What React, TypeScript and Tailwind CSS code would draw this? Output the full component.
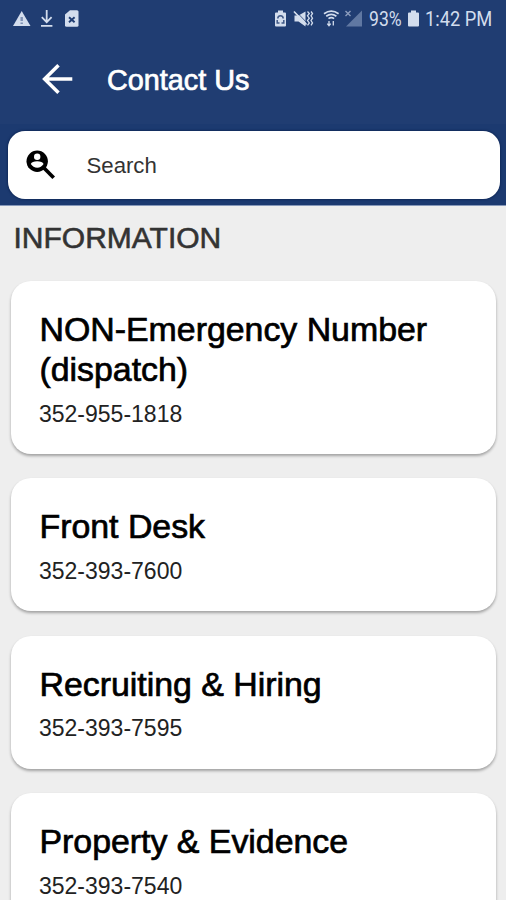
import React from 'react';

interface Contact {
    name: string;
    phone: string;
}

const contacts: Contact[] = [
    { name: 'NON-Emergency Number (dispatch)', phone: '352-955-1818' },
    { name: 'Front Desk', phone: '352-393-7600' },
    { name: 'Recruiting & Hiring', phone: '352-393-7595' },
    { name: 'Property & Evidence', phone: '352-393-7540' },
];

const StatusBar: React.FC = () => (
    <div className="flex h-[37px] items-center pl-3 pr-[13px] text-[#d3dded]">
        <svg width="19" height="18" viewBox="0 0 19 18" fill="currentColor">
            <path d="M9.7 1 18.5 16H1z" />
            <path d="M9.7 7v4M9.7 12.4v1.6" stroke="#7d90b3" strokeWidth="2.4" />
        </svg>
        <svg className="ml-2" width="16" height="18" viewBox="0 0 16 18" fill="none" stroke="currentColor" strokeWidth="1.8">
            <path d="M7.7 0v12M2.8 7.2l4.9 5 4.9-5M2 15.8h11.4" />
        </svg>
        <svg className="ml-[9px]" width="17" height="18" viewBox="0 0 17 18">
            <path d="M6 .3h7q1.5 0 1.5 1.5v13.4q0 1.5-1.5 1.5H2.5Q1 16.7 1 15.2V4.5z" fill="currentColor" />
            <path d="m5 7.3 5.6 5m0-5-5.6 5" stroke="#203d72" strokeWidth="1.9" />
        </svg>

        <div className="ml-auto flex items-center">
            <svg width="13" height="18" viewBox="0 0 13 18">
                <path d="M4 .5h5v2h2q1 0 1 1v12q0 1-1 1H2q-1 0-1-1v-12q0-1 1-1h2z" fill="currentColor" />
                <path d="M3.8 8.5q0-2.8 2.7-2.8t2.7 2.8M3.2 10v3h2.3M9.8 10v3H7.5" fill="none" stroke="#405987" strokeWidth="1.5" />
            </svg>
            <svg className="ml-[6px]" width="21" height="18" viewBox="0 0 21 18">
                <path d="M1.5 5.5h4l7-4v15l-7-5h-4z" fill="currentColor" />
                <path d="m1 1.5 12.5 13" stroke="currentColor" strokeWidth="1.8" />
                <path d="m2.6 1 12 12.5" stroke="#203d72" strokeWidth="0.8" />
                <path d="m14.5 1.5 1.8 2-1.8 2.3 1.8 2.4-1.8 2.4 1.8 2.3-1.8 2.4M18 1.5l1.5 2L18 5.8l1.5 2.4-1.5 2.4 1.5 2.3-1.5 2.4" fill="none" stroke="currentColor" strokeWidth="1.3" />
            </svg>
            <svg className="ml-[9px]" width="17" height="18" viewBox="0 0 17 18" fill="none" stroke="currentColor" strokeWidth="1.7">
                <path d="M1 3.7q7.3-5 14.6 0M3.2 6.2q5.1-3.5 10.2 0M5.5 8.6q2.8-2 5.6 0" />
                <path d="M6 11v4.5m-1.7-1.8L6 15.8l1.7-2.1M10.3 15.5V11" strokeWidth="1.3" />
            </svg>
            <svg className="ml-[4px]" width="19" height="18" viewBox="0 0 19 18">
                <path d="M18 .5v16H2z" fill="#6078a2" />
                <path d="m1.5 1 5 5m0-5-5 5" stroke="#8c9dbd" strokeWidth="1.4" />
            </svg>
            <span className="ml-[6px] w-[34px] whitespace-nowrap font-[Roboto,sans-serif] text-[20px] leading-none"><span className="inline-block origin-left scale-x-[0.88]">93%</span></span>
            <svg className="ml-[4px]" width="13" height="18" viewBox="0 0 13 18" fill="currentColor">
                <path d="M4 .5h5v2h2q1 0 1 1v12q0 1-1 1H2q-1 0-1-1v-12q0-1 1-1h2z" />
            </svg>
            <span className="ml-[5px] w-[68px] whitespace-nowrap font-[Roboto,sans-serif] text-[20px] leading-none"><span className="inline-block origin-left scale-x-[0.915]">1:42 PM</span></span>
        </div>
    </div>
);

const Header: React.FC = () => (
    <header className="h-[206px] border-b border-[#8698b9] bg-[#203d72]">
        <StatusBar />
        <div className="flex h-[87px] items-center pl-[41px]">
            <svg className="mb-[3px]" width="33" height="32" viewBox="0 0 33 32" fill="none" stroke="#fff" strokeWidth="3.5">
                <path d="M31.3 16H4M17.5 2.2 3.6 16l13.9 13.8" />
            </svg>
            <h1 className="ml-[33px] text-[28.8px] leading-none text-white [-webkit-text-stroke:0.7px_white]">Contact Us</h1>
        </div>
        <div className="h-[81px] bg-[#1c3a70] pl-[7.5px] pr-[6.5px] pt-[7px]">
            <label className="flex h-[68px] items-center rounded-[17px] bg-white pl-[18.5px] shadow-[0_0_2px_1px_#112b5c]">
                <svg width="30" height="30" viewBox="0 0 30 30">
                    <circle cx="11.2" cy="11.2" r="10.7" />
                    <circle cx="11.2" cy="6.8" r="3.2" fill="#fff" />
                    <path d="M4.8 14q1.2-2.8 6.4-2.8t6.4 2.8q-2.4 3.7-6.4 3.7t-6.4-3.7z" fill="#fff" />
                    <path d="m17.5 17.5 10.2 10.2" stroke="#000" strokeWidth="3.7" />
                </svg>
                <input
                    type="text"
                    placeholder="Search"
                    className="ml-[30.5px] mt-[2px] w-[380px] text-[22.2px] outline-none placeholder:text-[#333]"
                />
            </label>
        </div>
    </header>
);

const ContactCard: React.FC<{ contact: Contact }> = ({ contact }) => (
    <div className="rounded-[20px] bg-white pb-[25px] pl-[28px] pr-8 pt-[29px] shadow-[0_2px_3px_rgba(0,0,0,0.32)]">
        <h3 className="ml-[0.5px] text-[33.9px] leading-[39.6px] tracking-[-0.02px] text-black [-webkit-text-stroke:0.7px_black]">{contact.name}</h3>
        <p className="mt-[9px] text-[23px] leading-[30.5px] text-[#222]">{contact.phone}</p>
    </div>
);

export default function App() {
    return (
        <div className="h-[900px] w-[506px] overflow-hidden bg-[#eeeeee] font-['Liberation_Sans',Arial,sans-serif]">
            <Header />
            <main className="pl-[11px] pr-[10px]">
                <h2 className="ml-[2.5px] pt-[15px] text-[30px] leading-[34px] text-[#333] [-webkit-text-stroke:0.6px_#333]">INFORMATION</h2>
                <div className="mt-[26.4px] flex flex-col gap-[24.3px]">
                    {contacts.map((contact) => (
                        <ContactCard key={contact.phone} contact={contact} />
                    ))}
                </div>
            </main>
        </div>
    );
}
